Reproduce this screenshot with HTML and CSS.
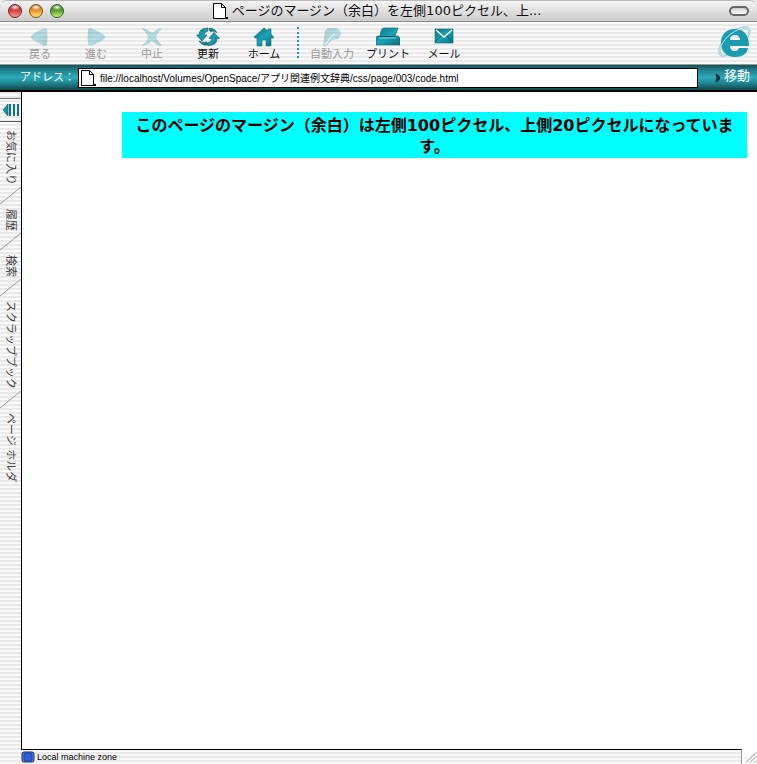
FILE: index.html
```html
<!DOCTYPE html>
<html lang="ja">
<head>
<meta charset="utf-8">
<title>ページのマージン（余白）を左側100ピクセル、上側20ピクセルに</title>
<link rel="stylesheet" href="styles.css">
</head>
<body>
<svg class="defs" aria-hidden="true">
  <defs>
    <linearGradient id="teal" x1="0" y1="0" x2="1" y2="1">
      <stop offset="0" stop-color="#0b7480"/><stop offset=".5" stop-color="#1ba3b5"/><stop offset="1" stop-color="#0b6f7c"/>
    </linearGradient>
    <symbol id="doc" viewBox="0 0 16 16">
      <path d="M1.5.5h8l4 4v11h-12z" fill="#fff" stroke="#000"/>
      <path d="M9.500.5v4h4" fill="none" stroke="#000"/>
      <path d="M14 14h2v2h-2z"/>
    </symbol>
  </defs>
</svg>
<header class="titlebar">
  <div class="lights">
    <button class="light red" aria-label="閉じる"></button>
    <button class="light amber" aria-label="しまう"></button>
    <button class="light green" aria-label="拡大"></button>
  </div>
  <div class="title"><svg class="doc"><use href="#doc"/></svg><span>ページのマージン（余白）を左側100ピクセル、上...</span></div>
  <button class="pill" aria-label="ツールバー"></button>
</header>
<nav class="toolbar">
  <button class="tool" disabled><svg viewBox="0 0 24 20"><path d="M2 10Q8 4 17 1q2 0 2 3 1 6 0 12 0 3-2 3Q8 16 2 10z" fill="url(#teal)"/></svg>戻る</button>
  <button class="tool" disabled><svg viewBox="0 0 24 20"><path d="M22 10Q16 4 6 1 4 1 4 4q-1 6 0 12 0 3 2 3 10-3 16-9z" fill="url(#teal)"/></svg>進む</button>
  <button class="tool" disabled><svg viewBox="0 0 24 20"><path d="M3 1q6 2 9 5 3-3 8-5l2 1q-5 4-6 8 1 4 6 8l-2 1q-5-2-8-5-3 3-9 5l-1-1q6-4 6-8-1-4-6-8z" fill="url(#teal)"/></svg>中止</button>
  <button class="tool"><svg viewBox="0 0 24 20"><g fill="url(#teal)" stroke="#075863" stroke-width=".6"><path d="M12 1Q3 1 3 8H.5L6 14l5-6H8q0-3 4-4zM3 14q3 5 9 4l-1-3q-4 1-8-1z"/><path d="M12 18.500q9 0 9-7h2.500L18 5.500l-5 6h3q0 3-4 4zM21 5.500q-3-5-8-4L14 4.500q3-1 7 1z"/></g></svg>更新</button>
  <button class="tool"><svg viewBox="0 0 24 20"><path d="M12 1 2 10l1 1h2v8h5v-6h4v6h5v-8h3l-3-4V2h-3v2z" fill="url(#teal)" stroke="#08717e" stroke-width=".6"/></svg>ホーム</button>
  <span class="divider"></span>
  <button class="tool" disabled><svg viewBox="0 0 24 20"><path d="M8 1h8q5 2 5 6l-3 5-6 1-6 6H3l1-8 1-7z" fill="url(#teal)"/><path d="m5 18 6-8 4-3" stroke="#fff" fill="none"/></svg>自動入力</button>
  <button class="tool"><svg viewBox="0 0 24 20"><path d="M8 1h14l-3 8h3q2 1 2 3v6H0v-6q0-3 2-3h2l1-5q1-3 3-3z" fill="url(#teal)" stroke="#08616c" stroke-width=".6"/><path d="M4 9.500h15" stroke="#075863"/><path d="M3 11h17" stroke="#83d2dc"/></svg>プリント</button>
  <button class="tool"><svg viewBox="0 0 24 20"><path d="M3 2h18v14H3z" fill="url(#teal)" stroke="#07626e" stroke-width=".6"/><path d="m9 9-6 6M15 9l6 6" fill="none" stroke="#075863"/><path d="m4 3 8 7 8-7" fill="none" stroke="#fff" stroke-width="1.500"/></svg>メール</button>
  <svg class="brand" viewBox="0 0 34 34" role="img" aria-label="Internet Explorer">
    <path d="M3 29C-1 23 5 14 13 7 21 1 29-1 32 2c2 2 1 6-1 10 1-5 1-8-1-9C25 2 16 6 10 12 4 19 2 25 4 28c2 2 6 1 9-1-4 4-8 4-10 2z" fill="#cfeaf0" stroke="#84c5d2" stroke-width=".7"/>
    <path d="M18 3C9 3 4 9 4 17s5 14 14 14c7 0 12-3 13-9h-9c-1 2-2 3-4 3-3 0-5-2-5-5h19C32 9 27 3 18 3zm-5 11c0-3 2-5 5-5s5 2 5 5z" fill="#1b9bb0"/>
    <path d="M4 20C8 11 19 2 27 3" fill="none" stroke="#c5e7ed"/>
  </svg>
</nav>
<form class="address">
  <label for="url">アドレス：</label>
  <div class="field"><svg class="doc"><use href="#doc"/></svg><input id="url" type="text" value="file://localhost/Volumes/OpenSpace/アプリ関連例文辞典/css/page/003/code.html"></div>
  <button class="go" type="button"><svg viewBox="0 0 6 10"><path d="M1 1q3 1 4 4-1 3-4 4 2-4 0-8z" fill="#042e35" stroke="#042e35"/></svg><span>移動</span></button>
</form>
<div class="workspace">
  <aside class="sidebar">
    <button class="collapse" aria-label="サイドバーを閉じる"><svg viewBox="0 0 17 14"><path d="M1 7 6 1v12z" fill="#1394a5" stroke="#064f59" stroke-width=".6"/><path d="M8 1v12M12 1v12M16 1v12" stroke="#0c7685" stroke-width="2"/></svg></button>
    <button class="tab">お気に入り</button>
    <svg class="slash" viewBox="0 0 21 17" preserveAspectRatio="none"><path d="M0 17 21 0"/></svg>
    <button class="tab">履歴</button>
    <svg class="slash" viewBox="0 0 21 17" preserveAspectRatio="none"><path d="M0 17 21 0"/></svg>
    <button class="tab">検索</button>
    <svg class="slash" viewBox="0 0 21 17" preserveAspectRatio="none"><path d="M0 17 21 0"/></svg>
    <button class="tab">スクラップブック</button>
    <svg class="slash" viewBox="0 0 21 17" preserveAspectRatio="none"><path d="M0 17 21 0"/></svg>
    <button class="tab">ページ ホルダ</button>
  </aside>
  <main class="page"><h1>このページのマージン（余白）は左側100ピクセル、上側20ピクセルになっています。</h1></main>
</div>
<footer class="status">
  <div class="zone"><svg viewBox="0 0 14 12"><rect x="1" y="1" width="12" height="10" rx="2" fill="#6f93d8" stroke="#182b60"/><rect x="3" y="2" width="8" height="8" rx="1" fill="#2860e0" stroke="#1c3f9c"/></svg><span>Local machine zone</span></div>
  <svg class="grip" viewBox="0 0 15 14"><path d="M4 13 14 3M8 13l6-6M12 13l2-2" stroke="#888" fill="none"/></svg>
</footer>
</body>
</html>
```
FILE: styles.css
```css
* { box-sizing: border-box; }
body {
  margin: 0;
  min-height: 100vh;
  display: grid;
  grid-template-rows: 22px 43px 27px 1fr 15px;
  font: 11px/14px "DejaVu Sans", "Noto Sans CJK JP", sans-serif;
  color: #111;
  background: repeating-linear-gradient(#e9e9e9 0 2px, #f9f9f9 2px 4px);
}
button { margin: 0; padding: 0; border: 0; background: none; font: inherit; color: inherit; }
.defs { position: absolute; width: 0; height: 0; }
.doc { width: 16px; height: 16px; flex: none; }

.titlebar {
  display: grid;
  grid-template-columns: 60px 1fr 64px;
  align-items: center;
  padding: 0 8px;
  background: linear-gradient(#f4f4f4, #cbcbcb);
  border-top: 1px solid #bbb;
  border-bottom: 1px solid #8d8d8d;
  border-radius: 7px 7px 0 0;
}
.lights { display: flex; gap: 7px; }
.light {
  width: 14px;
  height: 14px;
  border: 1px solid #555;
  border-radius: 50%;
}
.red { background: radial-gradient(ellipse 5px 3px at 50% 18%, #fff, transparent), linear-gradient(#a32a2a, #d9443f 50%, #f79c94); border-color: #6d2422; }
.amber { background: radial-gradient(ellipse 5px 3px at 50% 18%, #fff, transparent), linear-gradient(#b8601c, #ee9a2c 50%, #ffe878); border-color: #7b4d18; }
.green { background: radial-gradient(ellipse 5px 3px at 50% 18%, #fff, transparent), linear-gradient(#37701f, #5ea52c 50%, #c6f583); border-color: #2f5c1a; }
.title {
  display: flex;
  align-items: center;
  justify-content: center;
  gap: 4px;
  font-size: 13px;
  white-space: nowrap;
}
.pill {
  justify-self: end;
  width: 20px;
  height: 10px;
  border: 2px solid #666;
  border-radius: 5px;
  background: linear-gradient(#ccc, #fff);
}

.toolbar {
  display: flex;
  align-items: stretch;
  padding: 0 6px 0 12px;
  border-bottom: 1px solid #999;
}
.tool {
  width: 56px;
  display: flex;
  flex-direction: column;
  align-items: center;
  gap: 1px;
  padding-top: 5px;
  white-space: nowrap;
}
.tool svg { width: 24px; height: 20px; }
.tool:disabled { color: #999; }
.tool:disabled svg { opacity: .3; }
.divider { margin: 5px 5px 6px; border-left: 2px dotted #1b9bb0; }
.brand { width: 34px; height: 34px; margin: 4px 0 0 auto; }

.address {
  display: flex;
  align-items: center;
  padding: 0 7px 0 20px;
  background: linear-gradient(#155158, #1f7f8b 20%, #2eabba 50%, #1f7f8b 75%, #12454b);
  border-bottom: 2px solid #000;
  color: #fff;
}
.address label { width: 58px; }
.field {
  flex: 1;
  display: flex;
  align-items: center;
  gap: 4px;
  height: 20px;
  padding-left: 1px;
  border: 1px solid #000;
  background: #fff;
}
.field input {
  flex: 1;
  min-width: 0;
  padding: 2px 0 0;
  border: 0;
  outline: 0;
  background: none;
  color: #000;
  font: 10px/16px "Liberation Sans", "Noto Sans CJK JP", sans-serif;
}
.go { display: flex; align-items: center; gap: 3px; margin-left: 17px; font-size: 13px; }
.go svg { width: 6px; height: 10px; }
.go span { padding-bottom: 4px; }

.workspace { display: flex; }
.sidebar {
  width: 22px;
  display: flex;
  flex-direction: column;
  border-right: 1px solid #000;
}
.collapse {
  height: 24px;
  margin: 6px 0 8px;
  border-top: 1px solid #777;
  border-bottom: 1px solid #555;
}
.collapse svg { display: block; width: 17px; height: 14px; margin: 0 auto; }
.tab {
  align-self: flex-start;
  margin-left: 3px;
  writing-mode: vertical-rl;
  text-orientation: sideways;
  color: #444;
  white-space: nowrap;
}
.slash { width: 21px; height: 17px; margin: 2px 0 5px; }
.slash path { stroke: #999; fill: none; }
.page {
  flex: 1;
  padding: 20px 10px 20px 100px;
  background: #fff;
}
.page h1 {
  margin: 0;
  padding: 3px 0 1px;
  background: #0ff;
  color: #000;
  font-size: 16px;
  line-height: 21px;
  text-align: center;
}

.status { display: flex; color: #000; font: 9px/14px "Liberation Sans", sans-serif; }
.zone {
  flex: 1;
  display: flex;
  align-items: center;
  gap: 2px;
  margin-left: 21px;
  border-top: 1px solid #000;
  border-right: 1px solid #999;
}
.zone svg { width: 14px; height: 12px; }
.grip { width: 15px; height: 15px; background: #fff; }
```
